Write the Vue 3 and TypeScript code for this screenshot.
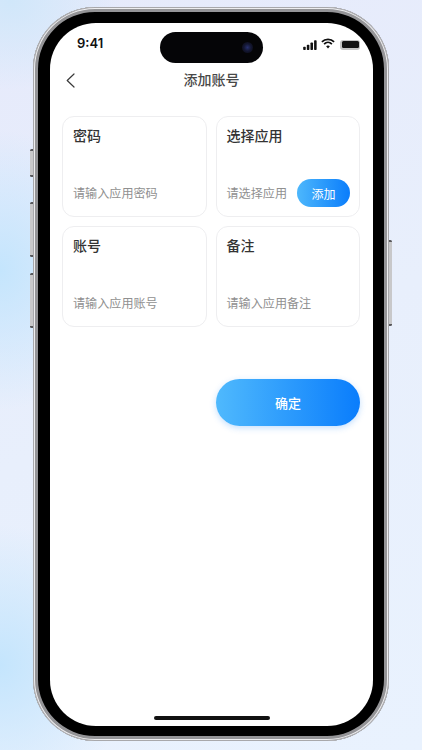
<script setup lang="ts">
interface Field { label: string; hint: string; action?: string }
const fields: Field[] = [
  { label: '密码', hint: '请输入应用密码' },
  { label: '选择应用', hint: '请选择应用', action: '添加' },
  { label: '账号', hint: '请输入应用账号' },
  { label: '备注', hint: '请输入应用备注' },
]
</script>

<template>
  <div class="page">
    <div class="phone">
      <span class="key key-mute"></span>
      <span class="key key-up"></span>
      <span class="key key-down"></span>
      <span class="key key-power"></span>
      <div class="screen">
        <div class="island"><span class="lens"></span></div>
        <div class="status">
          <span class="time">9:41</span>
          <div class="status-icons">
            <svg width="14" height="10" viewBox="0 0 15 11" fill="#111">
              <rect x="0" y="7.5" width="2.8" height="3.5" rx="0.8" />
              <rect x="4" y="5.2" width="2.8" height="5.8" rx="0.8" />
              <rect x="8" y="2.8" width="2.8" height="8.2" rx="0.8" />
              <rect x="12" y="0.3" width="2.8" height="10.7" rx="0.8" />
            </svg>
            <svg class="wifi" width="14" height="11" viewBox="0 0 14 11" fill="none" stroke="#111" stroke-width="1.7">
              <path d="M0.9 3.9 C4.2 0.4 9.8 0.4 13.1 3.9" />
              <path d="M3.1 6.1 C5.3 3.9 8.7 3.9 10.9 6.1" />
              <path d="M7 10.6 L5.1 8.2 C6.2 7.2 7.8 7.2 8.9 8.2 Z" fill="#111" stroke="none" />
            </svg>
            <div class="battery"><span></span></div>
          </div>
        </div>
        <header class="nav">
          <svg class="back" width="9" height="15" viewBox="0 0 9 15" fill="none" stroke="#3a3a3a" stroke-width="1.2" stroke-linecap="round" stroke-linejoin="round">
            <path d="M8 1 L1.2 7.5 L8 14" />
          </svg>
          <h1>添加账号</h1>
        </header>
        <main class="content">
          <div class="grid">
            <section v-for="f in fields" :key="f.label" class="card">
              <div class="label">{{ f.label }}</div>
              <div class="row">
                <span class="hint">{{ f.hint }}</span>
                <button v-if="f.action" class="add">{{ f.action }}</button>
              </div>
            </section>
          </div>
          <div class="actions">
            <button class="confirm">确定</button>
          </div>
        </main>
        <div class="home"></div>
      </div>
    </div>
  </div>
</template>

<style>
html, body { margin: 0; padding: 0; }
</style>

<style scoped>
.page {
  width: 422px;
  height: 750px;
  box-sizing: border-box;
  padding: 7px 33px 9px;
  overflow: hidden;
  background:
    radial-gradient(ellipse 120px 140px at 0px 270px, #c4e5fd 0%, rgba(196, 229, 253, 0) 100%),
    radial-gradient(ellipse 130px 140px at 0px 665px, #c4e5fd 0%, rgba(196, 229, 253, 0) 100%),
    radial-gradient(ellipse 110px 90px at 10px 0px, #d0e7fa 0%, rgba(208, 231, 250, 0) 100%),
    linear-gradient(155deg, #e6eafb 0%, #e8effc 50%, #e9f2fe 100%);
  font-family: "Noto Sans CJK SC", "Liberation Sans", sans-serif;
}
.phone {
  position: relative;
  height: 100%;
  box-sizing: border-box;
  padding: 16px 16px 15px 17px;
  background: #000;
  border-radius: 62px;
  box-shadow: inset 0 0 0 1px #a8a8ab, inset 0 0 0 2px #eeeef0, inset 0 0 0 5px #949497;
}
.key {
  position: absolute;
  width: 3px;
  background: linear-gradient(180deg, #58585b 0 2px, #c8c8ca 2px calc(100% - 2px), #58585b calc(100% - 2px));
  border-radius: 1.5px 0 0 1.5px;
}
.key-mute { left: -3px; top: 142px; height: 28px; }
.key-up { left: -3px; top: 195px; height: 55px; }
.key-down { left: -3px; top: 266px; height: 55px; }
.key-power { right: -3px; left: auto; top: 233px; height: 86px; border-radius: 0 1.5px 1.5px 0; }
.screen {
  position: relative;
  height: 100%;
  background: #fff;
  border-radius: 46px;
  overflow: hidden;
}
.island {
  position: absolute;
  left: 110px;
  top: 9px;
  width: 103px;
  height: 31px;
  border-radius: 16px;
  background: #050507;
}
.lens {
  position: absolute;
  right: 10px;
  top: 10px;
  width: 11px;
  height: 11px;
  border-radius: 50%;
  background: radial-gradient(circle, #27306e 0%, #141733 45%, #08080c 100%);
}
.status {
  height: 38px;
  box-sizing: border-box;
  padding: 5px 13px 0 27px;
  display: flex;
  align-items: center;
  justify-content: space-between;
}
.time {
  margin-bottom: 4px;
  font-family: Inter, "Liberation Sans", sans-serif;
  font-size: 13px;
  font-weight: 600;
  color: #111;
}
.status-icons {
  display: flex;
  align-items: center;
  gap: 4px;
}
.wifi {
  margin-bottom: 2px;
}
.battery {
  width: 20px;
  height: 10px;
  margin-left: 1px;
  box-sizing: border-box;
  padding: 1.5px;
  border-radius: 3px;
  background: #c4c4c4;
}
.battery span {
  display: block;
  height: 100%;
  border-radius: 1.5px;
  background: #111;
}
.nav {
  position: relative;
  height: 36px;
  display: flex;
  align-items: center;
  justify-content: center;
}
.nav h1 {
  margin: 0;
  font-size: 14px;
  font-weight: 500;
  color: #484848;
}
.back {
  position: absolute;
  left: 16px;
  top: 12px;
}
.content {
  padding: 19px 13px 0 12px;
}
.grid {
  display: grid;
  grid-template-columns: 145px 144.5px;
  grid-auto-rows: 101px;
  column-gap: 8.5px;
  row-gap: 9px;
}
.card {
  box-sizing: border-box;
  border: 1px solid #eeeef0;
  border-radius: 12px;
  background: #fff;
  padding: 8px 9px 9px 10px;
  display: flex;
  flex-direction: column;
  justify-content: space-between;
}
.label {
  font-size: 14px;
  line-height: 20px;
  font-weight: 500;
  color: #333;
}
.row {
  height: 28px;
  display: flex;
  align-items: center;
  justify-content: space-between;
}
.hint {
  margin-bottom: 2px;
  font-size: 12.1px;
  color: #909090;
}
.add {
  width: 53px;
  height: 28px;
  padding: 0;
  border: none;
  border-radius: 14px;
  background: linear-gradient(90deg, #4db7fc, #0a7dfb);
  color: #fff;
  font-family: inherit;
  font-size: 12px;
}
.actions {
  margin-top: 52px;
  display: flex;
  justify-content: flex-end;
}
.confirm {
  width: 144px;
  height: 47px;
  padding: 0;
  border: none;
  border-radius: 24px;
  background: linear-gradient(90deg, #4fb9fd, #0a7dfc);
  box-shadow: 0 2px 6px rgba(60, 150, 250, 0.3);
  color: #fff;
  font-family: inherit;
  font-size: 13px;
  font-weight: 500;
}
.home {
  position: absolute;
  left: 104px;
  bottom: 6px;
  width: 116px;
  height: 4px;
  border-radius: 2px;
  background: #111;
}
</style>
